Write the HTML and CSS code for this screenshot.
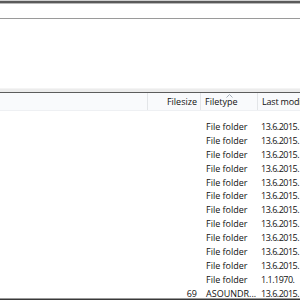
FILE: index.html
```
<!DOCTYPE html>
<html>
  <head>
    <title>Explorer</title>
    <link rel="stylesheet" href="styles.css">
  </head>
  <body>
    <div class="window">
      <div class="topbar"></div>
      <div class="pane"></div>
      <div class="splitter"></div>
      <div class="header">
        <div class="col col-name"></div>
        <div class="col col-size">Filesize</div>
        <div class="col col-type">
          Filetype
          <svg class="sort" width="7" height="4" viewBox="0 0 7 4"><path d="M0.5 3.5 L3.5 0.5 L6.5 3.5" fill="none" stroke="#a7b0bb" stroke-width="1"/></svg>
        </div>
        <div class="col col-date">Last modified</div>
      </div>
      <div class="list">
        <div class="row"><span class="c-name"></span><span class="c-size"></span><span class="c-type">File folder</span><span class="c-date">13.6.2015.</span></div>
        <div class="row"><span class="c-name"></span><span class="c-size"></span><span class="c-type">File folder</span><span class="c-date">13.6.2015.</span></div>
        <div class="row"><span class="c-name"></span><span class="c-size"></span><span class="c-type">File folder</span><span class="c-date">13.6.2015.</span></div>
        <div class="row"><span class="c-name"></span><span class="c-size"></span><span class="c-type">File folder</span><span class="c-date">13.6.2015.</span></div>
        <div class="row"><span class="c-name"></span><span class="c-size"></span><span class="c-type">File folder</span><span class="c-date">13.6.2015.</span></div>
        <div class="row"><span class="c-name"></span><span class="c-size"></span><span class="c-type">File folder</span><span class="c-date">13.6.2015.</span></div>
        <div class="row"><span class="c-name"></span><span class="c-size"></span><span class="c-type">File folder</span><span class="c-date">13.6.2015.</span></div>
        <div class="row"><span class="c-name"></span><span class="c-size"></span><span class="c-type">File folder</span><span class="c-date">13.6.2015.</span></div>
        <div class="row"><span class="c-name"></span><span class="c-size"></span><span class="c-type">File folder</span><span class="c-date">13.6.2015.</span></div>
        <div class="row"><span class="c-name"></span><span class="c-size"></span><span class="c-type">File folder</span><span class="c-date">13.6.2015.</span></div>
        <div class="row"><span class="c-name"></span><span class="c-size"></span><span class="c-type">File folder</span><span class="c-date">13.6.2015.</span></div>
        <div class="row"><span class="c-name"></span><span class="c-size"></span><span class="c-type">File folder</span><span class="c-date">1.1.1970.</span></div>
        <div class="row"><span class="c-name"></span><span class="c-size">69</span><span class="c-type">ASOUNDR...</span><span class="c-date">13.6.2015.</span></div>
      </div>
      <div class="bottombar"></div>
    </div>
  </body>
</html>
```
FILE: styles.css
```
/* Reset */
body {
  margin: 0;
  padding: 0;
  background-color: #ffffff;
  font-family: "Open Sans", "Noto Sans", sans-serif;
  font-size: 9px;
  color: #111111;
}

.window {
  width: 300px;
  height: 300px;
  overflow: hidden;
  display: flex;
  flex-direction: column;
}

/* Top frame lines */
.topbar {
  height: 19px;
  box-sizing: border-box;
  border-top: 1px solid #d0d0d0;
  background: linear-gradient(#5a5a5a 0, #5a5a5a 2px, #b8b8b8 2px, #b8b8b8 3px, #ffffff 3px);
  border-bottom: 1px solid #9a9a9a;
  flex-shrink: 0;
}

.pane {
  height: 69px;
  flex-shrink: 0;
}

.splitter {
  height: 5px;
  box-sizing: border-box;
  background-color: #ececec;
  border-top: 1px solid #f4f4f4;
  border-bottom: 1px solid #5c5c5c;
  flex-shrink: 0;
}

/* Column header */
.header {
  display: grid;
  grid-template-columns: 148px 53px 57px 1fr;
  height: 17px;
  background-color: #f9fafc;
  border-bottom: 1px solid #eef0f3;
  flex-shrink: 0;
}

.col {
  line-height: 17px;
  border-right: 1px solid #e3e5e8;
  white-space: nowrap;
  overflow: hidden;
  position: relative;
}

.col-size {
  text-align: right;
  padding-right: 3px;
}

.col-type {
  padding-left: 4px;
}

.col-date {
  padding-left: 4px;
  border-right: none;
  letter-spacing: -0.2px;
}

.sort {
  position: absolute;
  left: 25px;
  top: 1px;
  display: block;
}

/* File rows */
.list {
  flex: 1;
  min-height: 0;
  padding-top: 9px;
}

.row {
  display: grid;
  grid-template-columns: 148px 53px 57px 1fr;
  height: 13.9px;
  line-height: 13.9px;
  white-space: nowrap;
}

.c-size {
  text-align: right;
  padding-right: 4px;
}

.c-type {
  padding-left: 5px;
}

.c-date {
  padding-left: 3px;
  letter-spacing: -0.5px;
}

.bottombar {
  height: 1px;
  border-top: 1px solid #9a9a9a;
  background-color: #3a3a3a;
  flex-shrink: 0;
  position: relative;
}
```
